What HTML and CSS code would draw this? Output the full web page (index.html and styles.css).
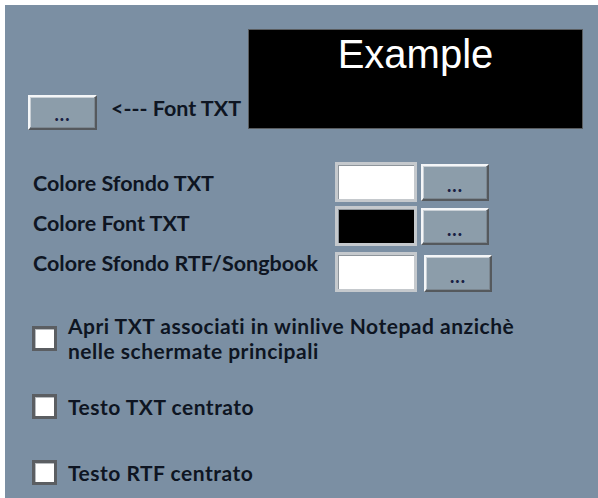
FILE: index.html
```html
<!DOCTYPE html>
<html lang="it">
<head>
<meta charset="utf-8">
<title>Opzioni TXT</title>
<link rel="stylesheet" href="styles.css">
</head>
<body>
<div class="panel">
  <div class="top">
    <button class="btn btn-font">...</button>
    <span class="font-label">&lt;--- Font TXT</span>
    <div class="example">Example</div>
  </div>

  <div class="colors">
    <div class="labels">
      <div class="label">Colore Sfondo TXT</div>
      <div class="label">Colore Font TXT</div>
      <div class="label">Colore Sfondo RTF/Songbook</div>
    </div>
    <div class="controls">
      <div class="ctrl-row">
        <div class="swatch swatch-white"></div>
        <button class="btn btn-pick">...</button>
      </div>
      <div class="ctrl-row">
        <div class="swatch swatch-black"></div>
        <button class="btn btn-pick">...</button>
      </div>
      <div class="ctrl-row ctrl-row-last">
        <div class="swatch swatch-white"></div>
        <button class="btn btn-pick btn-shift">...</button>
      </div>
    </div>
  </div>

  <div class="checks">
    <label class="check check-first">
      <span class="box"></span>
      <span class="check-text">Apri TXT associati in winlive Notepad anzichè<br>nelle schermate principali</span>
    </label>
    <label class="check check-second">
      <span class="box"></span>
      <span class="check-text">Testo TXT centrato</span>
    </label>
    <label class="check check-third">
      <span class="box"></span>
      <span class="check-text">Testo RTF centrato</span>
    </label>
  </div>
</div>
</body>
</html>
```

FILE: styles.css
```css
html, body {
  margin: 0;
  padding: 0;
  background: #ffffff;
}

body {
  width: 598px;
  height: 498px;
  overflow: hidden;
  font-family: "Lato", "Liberation Sans", sans-serif;
  font-weight: 700;
  color: #0e1522;
}

.panel {
  margin: 5px 0 0 5px;
  height: 493px;
  background: #7b8fa3;
  box-sizing: border-box;
  padding-top: 24px;
}

.top {
  display: flex;
  align-items: flex-end;
  padding-left: 23px;
  padding-right: 15px;
}

.btn {
  box-sizing: border-box;
  margin: 0;
  padding: 0 0 9px 0;
  background: #8c9daa;
  border-style: solid;
  border-width: 2px;
  border-color: #f4f6f8 #55595d #55595d #f4f6f8;
  box-shadow: inset -1px -1px 0 #7c8790, inset 1px 1px 0 #c9d0d6;
  font-family: "Lato", "Liberation Sans", sans-serif;
  font-weight: 900;
  font-size: 18px;
  line-height: 10px;
  color: #1a1f44;
  display: flex;
  align-items: flex-end;
  justify-content: center;
  letter-spacing: 1px;
}

.btn-font {
  width: 69px;
  height: 35px;
  margin-bottom: -1px;
}

.font-label {
  font-size: 21.5px;
  margin-left: 14px;
  margin-bottom: 8px;
  white-space: nowrap;
}

.example {
  margin-left: auto;
  box-sizing: border-box;
  width: 335px;
  height: 100px;
  background: #000000;
  border: 1px solid #5a5d60;
  color: #ffffff;
  font-family: "Liberation Sans", Arial, sans-serif;
  font-weight: 400;
  font-size: 40px;
  line-height: 46px;
  text-align: center;
  padding-top: 1px;
}

.colors {
  display: flex;
  margin-top: 33px;
  padding-left: 28px;
}

.labels {
  width: 302px;
  padding-top: 1px;
}

.label {
  font-size: 21.5px;
  height: 40px;
  line-height: 40px;
  white-space: nowrap;
}

.controls {
  display: flex;
  flex-direction: column;
  gap: 4px;
}

.ctrl-row {
  display: flex;
  align-items: center;
  gap: 4px;
}

.ctrl-row-last {
  margin-top: 1px;
}

.swatch {
  box-sizing: border-box;
  width: 82px;
  height: 40px;
  border: 3px solid #c5c9cd;
  box-shadow: inset 1px 1px 0 #8e959b;
}

.swatch-white {
  background: #ffffff;
}

.swatch-black {
  background: #000000;
}

.btn-pick {
  width: 68px;
  height: 37px;
}

.btn-shift {
  margin-left: 3px;
  margin-top: 4px;
}

.checks {
  display: flex;
  flex-direction: column;
  padding-left: 27px;
}

.check {
  display: flex;
  align-items: center;
  gap: 11px;
}

.check-first {
  margin-top: 21px;
}

.check-second {
  margin-top: 31px;
}

.check-third {
  margin-top: 41px;
}

.box {
  box-sizing: border-box;
  flex: none;
  width: 25px;
  height: 25px;
  background: #ffffff;
  border: 3px solid #5b5e62;
  box-shadow: inset 1px 1px 0 #b8bcc0;
}

.check-text {
  font-size: 21px;
  line-height: 25px;
  letter-spacing: 0.5px;
}
```
